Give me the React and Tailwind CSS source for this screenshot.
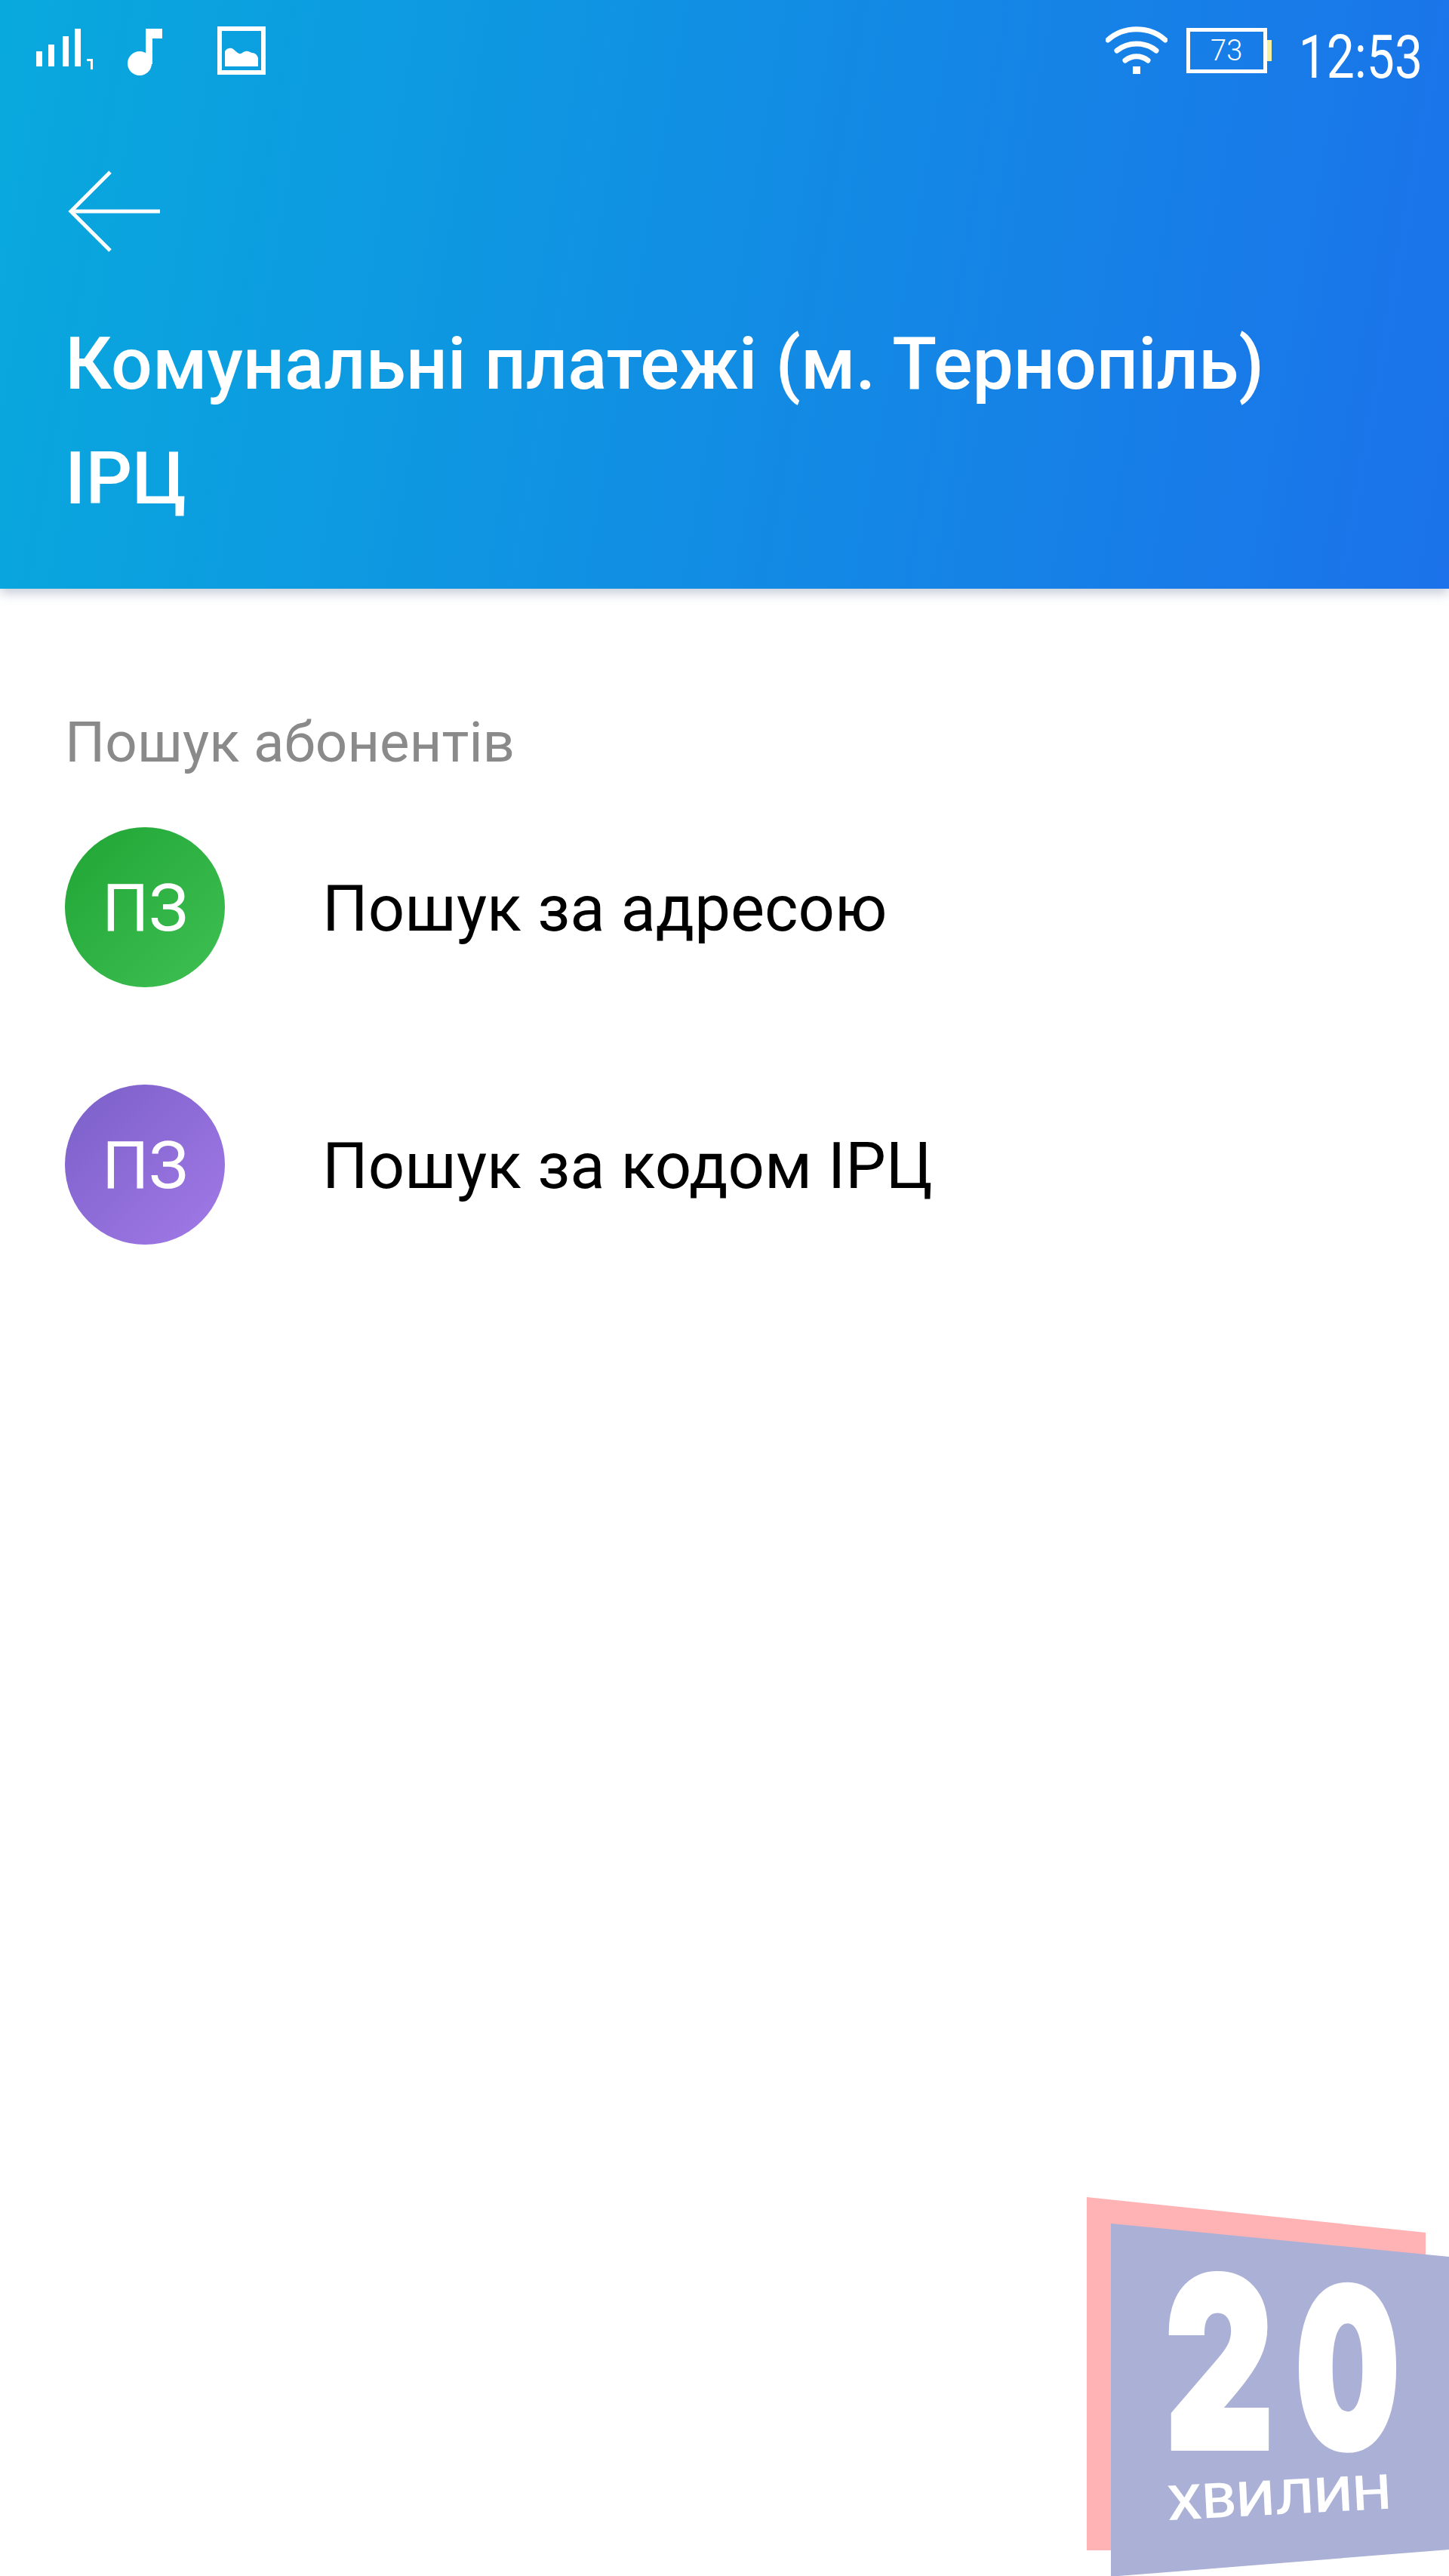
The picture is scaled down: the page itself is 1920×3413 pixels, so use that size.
import React from "react";

const SignalIcon = () => (
  <svg width="82" height="62" viewBox="0 0 82 62" fill="#fff">
    <rect x="0" y="30" width="8" height="20" />
    <rect x="16" y="21" width="8" height="29" />
    <rect x="35" y="10" width="8" height="40" />
    <rect x="51" y="0" width="8" height="50" />
    <path d="M67 40h8v14h-3v-11h-5z" />
  </svg>
);

const MusicIcon = () => (
  <svg width="50" height="62" viewBox="0 0 50 62" fill="#fff">
    <circle cx="17" cy="46" r="16" />
    <path d="M25 0h22v13H34v34h-9z" />
  </svg>
);

const ImageIcon = () => (
  <svg width="64" height="64" viewBox="0 0 64 64" fill="none">
    <rect x="3" y="3" width="58" height="58" stroke="#fff" strokeWidth="6" />
    <path
      d="M10 53V33c3-5 8-5 11-3 3 2 5 5 8 6 3 1 4-2 8-3 4-1 7 2 9 2 4 0 7 3 8 7v11z"
      fill="#fff"
    />
  </svg>
);

const WifiIcon = () => (
  <svg width="82" height="66" viewBox="0 0 82 66" fill="none" stroke="#fff" strokeWidth="7">
    <path d="M3 20C24 1 58 1 79 20" strokeLinecap="round" />
    <path d="M15 34c15-12 37-12 52 0" strokeLinecap="round" />
    <path d="M26 47c9-7 21-7 30 0" strokeLinecap="round" />
    <rect x="36" y="55" width="10" height="10" fill="#fff" stroke="none" />
  </svg>
);

const BackArrow = () => (
  <svg width="124" height="110" viewBox="0 0 124 110" fill="none" stroke="#fff" strokeWidth="5">
    <path d="M122 54H4" />
    <path d="M56 2L4 54l52 52" />
  </svg>
);

// watermark in the corner, sits over the page
const Logo = () => (
  <svg className="absolute right-0 top-[2911px]" width="480" height="502" viewBox="0 0 480 502">
    <polygon points="0,0 449,47 449,468 0,468" fill="#ffb3b5" />
    <polygon points="32,35 480,79 480,467 42,502 32,502" fill="#aab0d6" />
    <text
      transform="translate(104 332) scale(0.71 1)"
      fill="#fff"
      stroke="#fff"
      strokeWidth="8"
      className="font-['Inter',sans-serif] text-[312px] font-black"
    >
      2
    </text>
    <text
      transform="translate(277 332) scale(0.66 1)"
      fill="#fff"
      stroke="#fff"
      strokeWidth="8"
      className="font-['Inter',sans-serif] text-[292px] font-black"
    >
      0
    </text>
    <text
      x="108"
      y="428"
      fill="#fff"
      textLength="297"
      lengthAdjust="spacingAndGlyphs"
      transform="rotate(-3 108 428)"
      className="font-['Roboto',sans-serif] text-[64px] font-medium"
    >
      ХВИЛИН
    </text>
  </svg>
);

const SearchRow = ({ label, gradient }) => (
  <div className="flex items-center">
    <div
      className={`flex h-[212px] w-[212px] shrink-0 items-center justify-center rounded-full pt-[3px] text-[87px] text-white ${gradient}`}
    >
      ПЗ
    </div>
    <span className="ml-[129px] pt-[6px] text-[85px] leading-none text-black">{label}</span>
  </div>
);

export default function App() {
  return (
    <div className="relative h-[3413px] overflow-hidden bg-white font-['Roboto',sans-serif]">
      <header className="h-[780px] bg-[linear-gradient(100deg,#08a9dd,#1b72ea)] shadow-[0_6px_14px_rgba(90,110,140,0.35)]">
        <div className="flex items-start justify-between pt-[33px]">
          <div className="flex items-start pl-[48px] pt-[5px]">
            <SignalIcon />
            <div className="ml-[38px]">
              <MusicIcon />
            </div>
            <div className="ml-[70px] -mt-[3px]">
              <ImageIcon />
            </div>
          </div>
          <div className="flex items-start pr-[35px]">
            <WifiIcon />
            <div className="relative ml-[25px] mt-[4px] flex h-[60px] w-[107px] items-center justify-center border-[5px] border-white">
              <span className="text-[38px] font-light leading-none text-white">73</span>
              <span className="absolute -right-[11px] top-[11px] h-[28px] w-[6px] bg-[#f3f0a0]" />
            </div>
            <span className="ml-[42px] inline-block origin-top scale-y-[1.2] text-[66px] leading-[1.1] text-white">
              12:53
            </span>
          </div>
        </div>
        <div className="ml-[90px] mt-[120px]">
          <BackArrow />
        </div>
        <h1 className="ml-[86px] mt-[70px] text-[96.7px] font-medium leading-[152px] text-white">
          Комунальні платежі (м. Тернопіль)
          <br />
          ІРЦ
        </h1>
      </header>

      <main className="pl-[86px] pt-[167px]">
        <div className="text-[74.5px] leading-none text-[#8a8a8a]">Пошук абонентів</div>
        <div className="mt-[74px] flex flex-col gap-[129px]">
          <SearchRow label="Пошук за адресою" gradient="bg-gradient-to-br from-[#1fa535] to-[#3ec152]" />
          <SearchRow label="Пошук за кодом ІРЦ" gradient="bg-gradient-to-br from-[#7b5fc8] to-[#a27ae8]" />
        </div>
      </main>

      <Logo />
    </div>
  );
}
